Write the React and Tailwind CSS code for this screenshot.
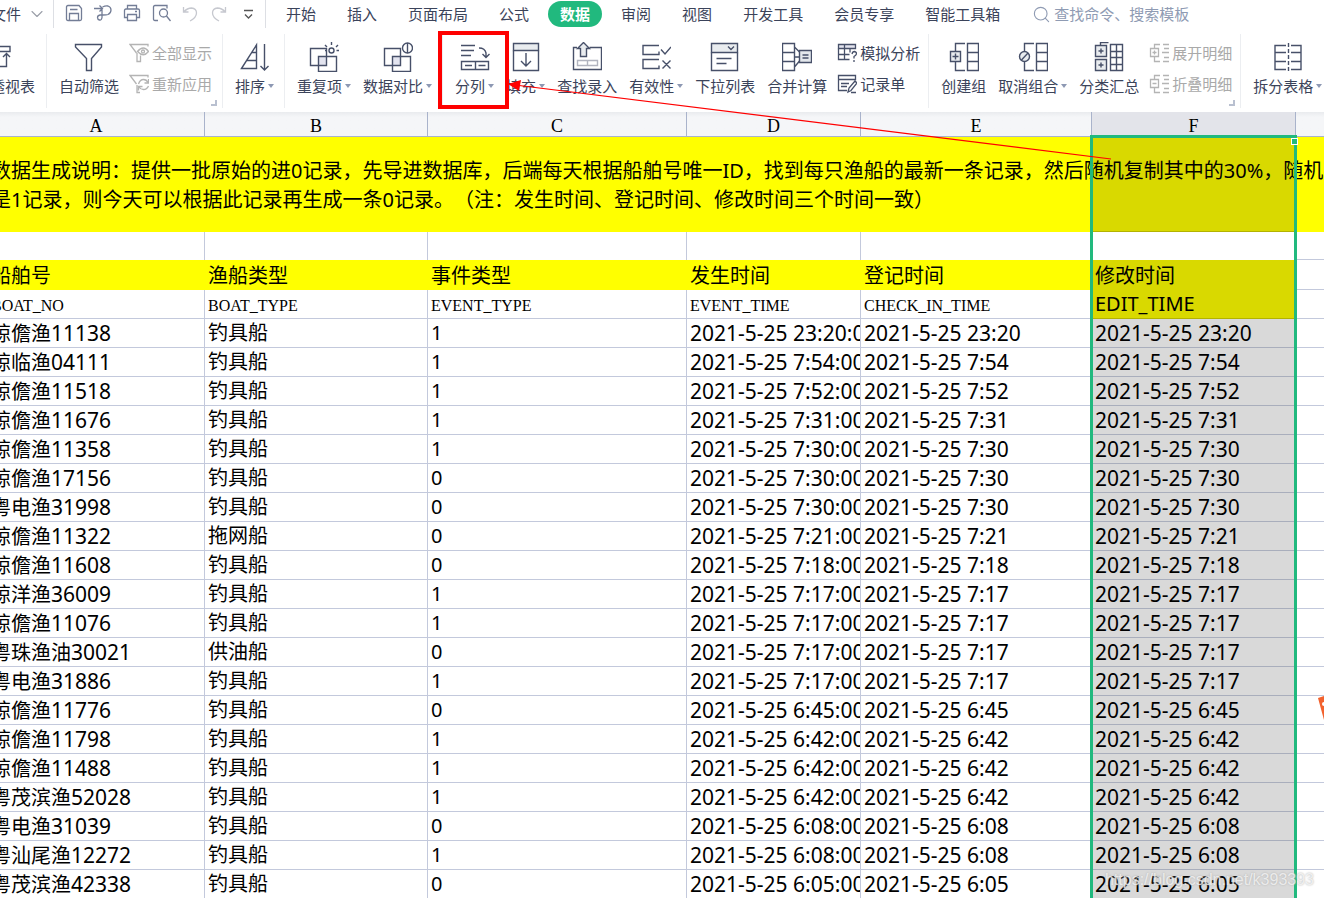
import { ChevronDown, Search } from 'lucide-react'

const boats = [
  ['琼儋渔', '11138', '钓具船', 1, '23:20'],
  ['琼临渔', '04111', '钓具船', 1, '7:54'],
  ['琼儋渔', '11518', '钓具船', 1, '7:52'],
  ['琼儋渔', '11676', '钓具船', 1, '7:31'],
  ['琼儋渔', '11358', '钓具船', 1, '7:30'],
  ['琼儋渔', '17156', '钓具船', 0, '7:30'],
  ['粤电渔', '31998', '钓具船', 0, '7:30'],
  ['琼儋渔', '11322', '拖网船', 0, '7:21'],
  ['琼儋渔', '11608', '钓具船', 0, '7:18'],
  ['琼洋渔', '36009', '钓具船', 1, '7:17'],
  ['琼儋渔', '11076', '钓具船', 1, '7:17'],
  ['粤珠渔油', '30021', '供油船', 0, '7:17'],
  ['粤电渔', '31886', '钓具船', 1, '7:17'],
  ['琼儋渔', '11776', '钓具船', 0, '6:45'],
  ['琼儋渔', '11798', '钓具船', 1, '6:42'],
  ['琼儋渔', '11488', '钓具船', 1, '6:42'],
  ['粤茂滨渔', '52028', '钓具船', 1, '6:42'],
  ['粤电渔', '31039', '钓具船', 0, '6:08'],
  ['粤汕尾渔', '12272', '钓具船', 1, '6:08'],
  ['粤茂滨渔', '42338', '钓具船', 0, '6:05'],
]

const tabs = ['开始', '插入', '页面布局', '公式', '数据', '审阅', '视图', '开发工具', '会员专享', '智能工具箱']

const quickIcons = {
  保存: <path d="M1.5 3q0-1.5 1.500-1.500h11l2.500 3v10.500q0 1.500-1.500 1.500h-12q-1.500 0-1.500-1.500zM4.500 16.500v-7h9v7M5 5.500h7.500" />,
  输出: <path d="M0 4.500h8M5.500 1.500l3 3-3 3M8.500 3q3-1.500 5.500-1 3 1 3 4t-3 4.500q-1.500.500-5 .500h-3q-2.500.500-2.500 2.500t2 2.500 2.500-2.500v-8" />,
  打印: <path d="M4.500 5v-3.500h9v3.500M4 13.500h-2.500v-7q0-1.500 1.500-1.500h12q1.500 0 1.500 1.500v7h-2.500M4.500 10.500h9v6h-9zM12 7.500h2" />,
  打印预览: <path d="M6 16.500h-3q-1.500 0-1.500-1.500v-12q0-1.500 1.500-1.500h12v3M15.500 9a4 4 0 1 1-8 0 4 4 0 0 1 8 0zM14.500 12l4 5" />,
  撤销: <path d="M2.500 3v5h5M2.500 8q4-4 8-4 5 .500 5 5t-6.500 8" stroke="#c6c8cf" />,
  恢复: <path d="M15.500 3v5h-5M15.500 8q-4-4-8-4-5 .500-5 5t6.500 8" stroke="#c6c8cf" />,
  更多: <path d="M5 6.500h9M6 10.500l3.500 3.500 3.500-3.500" stroke="#555" />,
}

// large ribbon drawings, 30 x 30
const icons = {
  pivot: <path d="M0 4.500h27v5h-27M23.500 12v12.500h-23.500M20 15l3.500-3.500 3.500 3.500" />,
  filter: <path d="M1.500 2.500h26v2.500l-10 11.500v12h-5v-12l-11-11.500z" />,
  sort: <path d="M1.500 26.500l15-23.500v23.500zM12 10.500h4.500M7 18.500h9.500M24.500 2v26M20.500 24l4 4 4-4" />,
  duplicate: (
    <>
      <path d="M9 15h9v8h-9z" fill="#e3e4ef" stroke="none" />
      <path d="M1.500 6.500h16v17h-16zM9.500 14.500h18v15h-18z" />
      <circle cx="22.500" cy="8.500" r="2.500" />
      <path d="M22.500 0v3M16 3l2 2M29 3l-2 2M16 8.500h2M27.500 8.500h3" />
    </>
  ),
  compare: (
    <>
      <path d="M9 15h9v8h-9z" fill="#e3e4ef" stroke="none" />
      <path d="M1.500 6.500h16v17h-16zM9.500 14.500h18v15h-18z" />
      <circle cx="24.500" cy="6" r="5" fill="#fff" />
      <path d="M24.500 1v10" />
    </>
  ),
  split: <path d="M1 3.500h14M1 8.500h13M1 13.500h10M19 6q6 0 7 5v4M22.500 12l3.500 3.500 3.500-3.500M1.500 19.500h27v8h-27zM15.500 19.500v8M5 23.500h7M18.500 23.500h7" />,
  fill: (
    <>
      <path d="M2.500 1.500h25v7h-25z" fill="#e9ecef" />
      <path d="M2.500 8.500v20h25v-20M15 11v13M10 19l5 5 5-5" />
    </>
  ),
  lookup: (
    <>
      <path d="M5 5.500h-3.500v22h28v-22h-12" />
      <path d="M5.500 18.500h20v5h-20zM15.500 18.500v5" stroke="#b1b4bf" />
      <path d="M8.500 14.500v-8h-3l6-6 6 6h-3v8z" fill="#e9ecef" />
    </>
  ),
  validity: <path d="M18 3.500h-16v9h16v-3M18 17.500h-16v9h16v-3M20 7.500l4 4.500 6-7M21.500 18.500l8 8M29.500 18.500l-8 8" />,
  dropdown: (
    <>
      <path d="M1.500 1.500h26v9h-26z" fill="#e9ecef" />
      <path d="M1.500 10.500v18h26v-18M18 4.500l3 3 3-3M6.500 16.500h15M6.500 21.500h10" />
    </>
  ),
  consolidate: (
    <>
      <path d="M.500 1.500h12v27h-12zM.500 10.500h12M.500 19.500h12M12.500 5l5 5M12.500 15h5M12.500 25l5-6" />
      <path d="M17.500 8.500h12v12h-12z" fill="#e3e7ec" />
      <path d="M20.500 13h6M20.500 16h6" />
    </>
  ),
  group: (
    <>
      <path d="M16 1.500h-9.500v27h9.500M18.500 1.500h11v27h-11zM18.500 10.500h11M18.500 19.500h11" />
      <path d="M1.500 9.500h10v10h-10z" fill="#e9ecef" />
      <path d="M6.500 11.500v6M3.500 14.500h6" />
    </>
  ),
  ungroup: (
    <>
      <path d="M16 1.500h-9.500v27h9.500M18.500 1.500h11v27h-11zM18.500 10.500h11M18.500 19.500h11" />
      <circle cx="6.500" cy="14.500" r="5" fill="#e9ecef" />
      <path d="M3.500 18l6.500-7" />
    </>
  ),
  subtotal: (
    <>
      <path d="M6.500 3v-2.500h8M16.500 2.500h12v26h-12zM22.500 2.500v26M16.500 9.500h12M16.500 15.500h12M16.500 22.500h12" />
      <path d="M1.500 3.500h11v11h-11zM1.500 17.500h11v11h-11z" fill="#e9ecef" />
      <path d="M7 6.500v5M4.500 9h5M7 20.500v5M4.500 23h5" />
    </>
  ),
  splitTable: (
    <>
      <path d="M13 3.500h-11v24h11M2 10.500h11M2 19.500h11M18 3.500h10v24h-10M18 10.500h10M18 19.500h10" />
      <path d="M15.500 1v29" strokeDasharray="4 2" />
    </>
  ),
}

// small ribbon drawings, 20 x 20
const smallIcons = {
  showAll: (
    <>
      <path d="M8 10v8.500h3.500v-6M7.500 10l-6.500-8.500h18v2" />
      <path d="M8.500 8.500q6-7 11 0-5 6.500-11 0z" />
      <circle cx="14" cy="8.500" r="1.500" />
    </>
  ),
  reapply: <path d="M8 11v7.500h3M7.500 10l-6.500-8.500h18v2M9.500 10q1.500-4.500 5-4.500 3 0 4.500 3M19.500 5v4h-4M19.500 12q-1.500 3.500-5 3.500-3 0-4.500-2.500M9.500 16.500v-4h4" />,
  whatIf: (
    <>
      <path d="M1.500 1.500h17v4h-17z" fill="#e3e4ef" />
      <path d="M1.500 5.500v11h11M1.500 11.500h11M7.500 1.500v15M13 5.500v4M15 11q.500-2.500 2.500-2.500 2 .500 2 2t-2.500 3v2M17 17v2" />
    </>
  ),
  record: <path d="M10 16.500h-8.500v-15h17v4h-17M4 9.500h8M4 12.500h6M11 18l1-4 6-7 2 2-6 7.500zM14 18.500h5" />,
  expand: <path d="M11 1.500h-5.500v4M5.500 13v5.500h5.500M1.500 5.500h8v8h-8zM5.500 7.500v4M3.500 9.500h4M14 1.500h6M15 5.500h5M13 9.500h7M15 14.500h5M14 18.500h6" />,
  collapse: <path d="M11 1.500h-5.500v4M5.500 13v5.500h5.500M1.500 5.500h8v8h-8zM3.500 9.500h4M14 1.500h6M15 5.500h5M13 9.500h7M15 14.500h5M14 18.500h6" />,
}

function Tool({ icon, label, arrow }) {
  return (
    <button className="flex flex-col items-center gap-1 pt-3 whitespace-nowrap">
      <svg width="30" height="30" viewBox="0 0 30 30" fill="none" stroke="#475069" strokeWidth="1.4">
        {icons[icon]}
      </svg>
      <span className="flex items-center leading-5">
        {label}
        {arrow && <span className="ml-[3px] border-x-[3px] border-t-4 border-x-transparent border-t-[#8d98b3]" />}
      </span>
    </button>
  )
}

function SmallTools({ items, disabled }) {
  return (
    <div className={`-ml-0.5 flex flex-col gap-[11px] pt-[13px] ${disabled ? 'text-[#a9a9a9]' : ''}`}>
      {items.map(([icon, label]) => (
        <button key={label} disabled={disabled} className="flex items-center gap-[3px] whitespace-nowrap leading-5">
          <svg width="20" height="20" viewBox="0 0 20 20" fill="none" stroke={disabled ? '#b4b4b4' : '#475069'} strokeWidth="1.3">
            {smallIcons[icon]}
          </svg>
          {label}
        </button>
      ))}
    </div>
  )
}

function Group({ children, corner, className = 'pl-3 pr-2.5' }) {
  return (
    <div className="relative flex shrink-0">
      <div className={`mb-1 mt-1 flex items-start gap-3 border-r border-[#eceef1] ${className}`}>
        <div className="-mt-1 flex items-start gap-3">{children}</div>
      </div>
      {corner && <span className="absolute bottom-1.5 right-1.5 size-[6px] border-b-2 border-r-2 border-[#b9c0d0]" />}
    </div>
  )
}

function TopBar() {
  return (
    <div className="flex h-[30px] items-start whitespace-nowrap pl-[3px] text-[15px] leading-5">
      <button className="flex items-center pt-1">
        文件
        <ChevronDown className="ml-1.5 text-[#9a9ea8]" size={20} strokeWidth={1.3} />
      </button>
      <div className="ml-1.5 flex h-7 shrink-0 gap-[11px] border-x border-[#dddfe4] pl-[11px] pr-2 pt-1">
        {Object.entries(quickIcons).map(([name, drawing]) => (
          <button key={name} aria-label={name} className="h-[18px]">
            <svg width="18" height="18" viewBox="0 0 18 18" fill="none" stroke="#737d96" strokeWidth="1.3" className="overflow-visible">
              {drawing}
            </svg>
          </button>
        ))}
      </div>
      <nav className="ml-5 flex shrink-0 gap-[31px] pt-px">
        {tabs.map((tab) => (
          <button
            key={tab}
            className={tab === '数据' ? '-mx-3 h-[26px] rounded-full bg-[#21b97e] px-3 font-bold text-white' : 'h-[26px]'}
          >
            {tab}
          </button>
        ))}
      </nav>
      <label className="ml-8 flex h-7 flex-1 items-center gap-[3px] text-[#8f9bb3]">
        <Search size={19} strokeWidth={1.4} />
        <input
          type="text"
          aria-label="查找"
          placeholder="查找命令、搜索模板"
          className="min-w-0 flex-1 bg-transparent outline-none placeholder:text-[#8f9bb3]"
        />
      </label>
    </div>
  )
}

function Ribbon() {
  return (
    <div className="-ml-7 flex h-[82px] text-[15px]">
      <Group className="pr-[11px]">
        <Tool icon="pivot" label="数据透视表" />
      </Group>
      <Group corner>
        <Tool icon="filter" label="自动筛选" />
        <SmallTools disabled items={[['showAll', '全部显示'], ['reapply', '重新应用']]} />
      </Group>
      <Group>
        <Tool icon="sort" label="排序" arrow />
      </Group>
      <Group>
        <Tool icon="duplicate" label="重复项" arrow />
        <Tool icon="compare" label="数据对比" arrow />
      </Group>
      <Group className="pl-3 pr-2">
        <Tool icon="split" label="分列" arrow />
        <Tool icon="fill" label="填充" arrow />
        <Tool icon="lookup" label="查找录入" />
        <Tool icon="validity" label="有效性" arrow />
        <Tool icon="dropdown" label="下拉列表" />
        <Tool icon="consolidate" label="合并计算" />
        <SmallTools items={[['whatIf', '模拟分析'], ['record', '记录单']]} />
      </Group>
      <Group corner className="pl-3 pr-2">
        <Tool icon="group" label="创建组" />
        <Tool icon="ungroup" label="取消组合" arrow />
        <Tool icon="subtotal" label="分类汇总" />
        <SmallTools disabled items={[['expand', '展开明细'], ['collapse', '折叠明细']]} />
      </Group>
      <Group>
        <Tool icon="splitTable" label="拆分表格" arrow />
      </Group>
    </div>
  )
}

const cell = 'border-b border-r border-[#c3c9dc] p-0 pl-[3px]'
const picked = 'border-b border-[#a9aebc] bg-[#d9d9d9] p-0 pl-[3px]'
const code = `${cell} pt-1 font-["Liberation_Serif",serif] text-base`

function Sheet() {
  return (
    <div className="relative flex-1 overflow-hidden">
      <table className="w-full table-fixed border-separate border-spacing-0 whitespace-nowrap text-left text-xl leading-6 text-black">
        <colgroup>
          <col className="w-[217px]" />
          <col className="w-[223px]" />
          <col className="w-[259px]" />
          <col className="w-[174px]" />
          <col className="w-[231px]" />
          <col className="w-[204px]" />
          <col />
        </colgroup>
        <thead>
          <tr className="h-[25px] bg-linear-to-b from-[#e9ebee] via-[#f5f6f8] via-20% to-[#f5f6f8] text-center font-['Liberation_Serif',serif] text-lg leading-5">
            {['A', 'B', 'C', 'D', 'E'].map((name) => (
              <th key={name} className="border-b border-r border-[#a9b3cb] p-0 pt-1 font-normal">{name}</th>
            ))}
            <th className="border-b border-r border-[#a9b3cb] bg-[#e3e4ea] p-0 pt-1 font-normal">F</th>
            <th className="border-b border-[#a9b3cb] p-0" />
          </tr>
        </thead>
        <tbody>
          <tr className="h-[95px] bg-[#ffff00]">
            <td className="p-0 pl-[3px]">
              <p className="w-0 leading-[29px] [text-spacing-trim:space-all]">
                数据生成说明：提供一批原始的进0记录，先导进数据库，后端每天根据船舶号唯一ID，找到每只渔船的最新一条记录，然后随机复制其中的30%，随机
                <br />
                是1记录，则今天可以根据此记录再生成一条0记录。（注：发生时间、登记时间、修改时间三个时间一致）
              </p>
            </td>
            <td colSpan={4} />
            <td className="border-b border-[#b3b300] bg-[#d9d900]" />
            <td />
          </tr>
          <tr className="h-7">
            {[0, 1, 2, 3, 4].map((i) => (
              <td key={i} className="border-r border-[#c3c9dc] p-0" />
            ))}
            <td />
            <td className="border-b border-[#c3c9dc]" />
          </tr>
          <tr className="h-[30px]">
            {['船舶号', '渔船类型', '事件类型', '发生时间', '登记时间'].map((name) => (
              <td key={name} className="bg-[#ffff00] p-0 pl-[3px] pt-0.5">{name}</td>
            ))}
            <td className="bg-[#d9d900] p-0 pl-[3px] pt-0.5">修改时间</td>
            <td className="border-b border-[#c3c9dc]" />
          </tr>
          <tr className="h-[29px]">
            {['BOAT_NO', 'BOAT_TYPE', 'EVENT_TYPE', 'EVENT_TIME', 'CHECK_IN_TIME'].map((name) => (
              <td key={name} className={`${code} leading-6`}>{name}</td>
            ))}
            <td className="border-b border-[#b3b300] bg-[#d9d900] p-0 pl-[3px]">EDIT_TIME</td>
            <td className="border-b border-[#c3c9dc]" />
          </tr>
          {boats.map(([name, no, type, event, time]) => (
            <tr key={no} className="h-[29px]">
              <td className={cell}>
                {name}
                <span className="text-[21px]">{no}</span>
              </td>
              <td className={cell}>{type}</td>
              <td className={cell}>{event}</td>
              <td className={`${cell} overflow-hidden text-[21px]`}>2021-5-25 {time}:00</td>
              <td className={`${cell} text-[21px]`}>2021-5-25 {time}</td>
              <td className={`${picked} text-[21px]`}>2021-5-25 {time}</td>
              <td className="border-b border-[#c3c9dc] p-0" />
            </tr>
          ))}
        </tbody>
      </table>
      {/* selected column outline with its handle */}
      <div className="pointer-events-none absolute -bottom-1 left-[1102px] top-[23px] w-[207px] border-[3px] border-[#21b97e]">
        <span className="absolute -right-1 top-0 size-[7px] border border-white bg-[#21b97e]" />
      </div>
    </div>
  )
}

export default function App() {
  return (
    <div className="relative h-screen overflow-hidden bg-white font-['Noto_Sans','Noto_Sans_CJK_SC',sans-serif] text-[#3b435a]">
      <div className="-ml-3 flex h-full flex-col">
        <TopBar />
        <Ribbon />
        <Sheet />
      </div>

      <div className="pointer-events-none absolute left-[438px] top-[31px] h-[78px] w-[71px] border-4 border-[#fe0000]" />
      <svg className="pointer-events-none absolute left-0 top-0" width="1324" height="200" viewBox="0 0 1324 200">
        <path d="M515 85L1111 159" stroke="#f00" strokeWidth="1.2" />
        <path d="M508 84l13-4-2 11z" fill="#f00" />
      </svg>
      <svg className="pointer-events-none absolute right-0 top-[696px]" width="6" height="24" viewBox="0 0 6 24">
        <path d="M0 2l6-2v24z" fill="#f2622e" />
        <circle cx="6" cy="8" r="2" fill="#fff" />
      </svg>
      <span className="pointer-events-none absolute bottom-2 right-2.5 font-['Liberation_Sans',sans-serif] text-base leading-5 text-white/70 [text-shadow:0_0_2px_#aaa]">
        https://blog.csdn.net/k393393
      </span>
    </div>
  )
}
